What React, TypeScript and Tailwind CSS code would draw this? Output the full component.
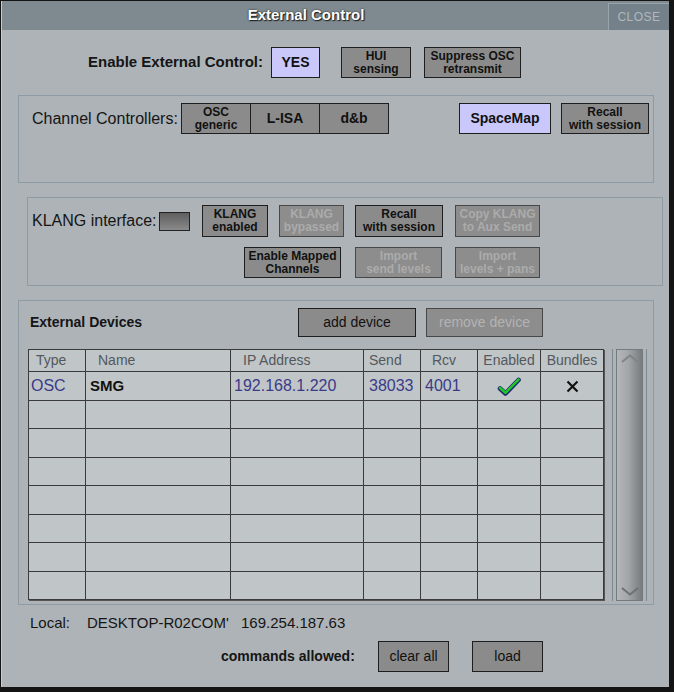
import React from "react";

type Tone = "normal" | "on" | "off";

const tones: Record<Tone, string> = {
  normal: "bg-[#8b8b8b] border-[#1e1e1e] text-[#111]",
  on: "bg-[#cac8fb] border-[#1e1e1e] text-[#111]",
  off: "bg-[#8d8d8d] border-[#474747] text-[#ababab]",
};

function Btn({
  className,
  tone = "normal",
  children,
}: {
  className: string;
  tone?: Tone;
  children: React.ReactNode;
}) {
  return (
    <div
      className={`flex shrink-0 flex-col items-center justify-center border text-center ${tones[tone]} ${className}`}
    >
      {children}
    </div>
  );
}

function Two({ a, b }: { a: string; b: string }) {
  return (
    <>
      <span className="block text-[12px] font-bold leading-[13px]">{a}</span>
      <span className="block text-[12px] font-bold leading-[13px]">{b}</span>
    </>
  );
}

const cols = [
  { w: "w-[56px]", head: "pl-[7px] text-[#4b4a8f]", cell: "pl-[2px]" },
  { w: "w-[145px] border-l", head: "pl-[12px]", cell: "pl-[4px]" },
  { w: "w-[133px] border-l", head: "pl-[12px]", cell: "pl-[3px]" },
  { w: "w-[57px] border-l", head: "pl-[5px]", cell: "pl-[5px]" },
  { w: "w-[57px] border-l", head: "pl-[11px]", cell: "pl-[4px]" },
  { w: "w-[63px] border-l", head: "justify-center", cell: "justify-center" },
  { w: "w-[63px] border-l", head: "justify-center", cell: "justify-center" },
];

const headers = ["Type", "Name", "IP Address", "Send", "Rcv", "Enabled", "Bundles"];

function Check() {
  return (
    <svg width="26" height="20" viewBox="0 0 26 20">
      <path d="M4 12.5 L9.5 17.5 L22.5 4" fill="none" stroke="#1d2570" strokeWidth="4.6" strokeLinecap="round" strokeLinejoin="round" />
      <path d="M4 12 L9.5 16.8 L22.5 3.6" fill="none" stroke="#22c72a" strokeWidth="2.6" strokeLinecap="round" strokeLinejoin="round" />
    </svg>
  );
}

function Cross() {
  return (
    <svg width="13" height="13" viewBox="0 0 13 13">
      <path d="M1.5 1.5 L11.5 11.5 M11.5 1.5 L1.5 11.5" stroke="#111" strokeWidth="2.2" />
    </svg>
  );
}

function DeviceTable() {
  const rows = [0, 1, 2, 3, 4, 5, 6, 7];
  return (
    <div className="w-[576px] border border-[#3a3a3a] bg-[#c0c5c8] shadow-[1px_1px_0_#555]">
      <div className="flex h-[21px]">
        {cols.map((c, i) => (
          <div
            key={i}
            className={`flex items-center border-[#3a3a3a] text-[14px] text-[#53585c] ${c.w} ${c.head}`}
          >
            {headers[i]}
          </div>
        ))}
      </div>
      {rows.map((r) => (
        <div
          key={r}
          className={`flex border-t border-[#3a3a3a] ${r % 2 === 0 ? "h-[29px]" : "h-[28px]"}`}
        >
          {cols.map((c, i) => (
            <div
              key={i}
              className={`flex items-center border-[#3a3a3a] text-[16px] text-[#3b3a88] ${c.w} ${c.cell}`}
            >
              {r === 0 && i === 0 && "OSC"}
              {r === 0 && i === 1 && (
                <span className="text-[15px] font-bold text-[#111]">SMG</span>
              )}
              {r === 0 && i === 2 && "192.168.1.220"}
              {r === 0 && i === 3 && "38033"}
              {r === 0 && i === 4 && "4001"}
              {r === 0 && i === 5 && <Check />}
              {r === 0 && i === 6 && <Cross />}
            </div>
          ))}
        </div>
      ))}
    </div>
  );
}

function Scrollbar() {
  return (
    <div className="ml-[8px] flex h-[252px] w-[35px] border-x border-[#7d8a92] px-[3px]">
      <div className="flex w-full flex-col items-center justify-between border border-[#737b7f] bg-[linear-gradient(90deg,#b3b7b9_0%,#a2a6a8_45%,#777b7d_100%)] py-[4px]">
        <svg width="18" height="9" viewBox="0 0 18 9">
          <path d="M1 8 L9 1.5 L17 8" fill="none" stroke="#7f8486" strokeWidth="2" />
        </svg>
        <svg width="18" height="9" viewBox="0 0 18 9">
          <path d="M1 1 L9 7.5 L17 1" fill="none" stroke="#6d7274" strokeWidth="2" />
        </svg>
      </div>
    </div>
  );
}

export default function App() {
  return (
    <div className="h-[692px] w-[674px] bg-[#141414] pb-[5px] pl-px pr-[5px] pt-px font-['Liberation_Sans',Arial,sans-serif] text-[#151515]">
      <div className="flex h-full flex-col border-l border-[#c9cdd0] bg-[#adb3b7]">
        {/* title bar */}
        <div className="flex h-[29px] shrink-0 bg-[#7e8a90]">
          <div className="flex flex-1 items-center justify-center pl-[2px] text-[15px] font-bold text-white [text-shadow:0_0_2px_#1e1e1e,1px_1px_1px_#1e1e1e]">
            External Control
          </div>
          <div className="mt-[2px] flex w-[61px] items-center justify-center border-l border-t border-[#9aa5ab] bg-[#75818a] text-[12px] tracking-[0.5px] text-[#aeb8bd]">
            CLOSE
          </div>
        </div>

        {/* enable row */}
        <div className="mt-[17px] flex items-center pl-[86px]">
          <span className="w-[183px] text-[15px] font-bold">Enable External Control:</span>
          <Btn tone="on" className="h-[31px] w-[49px]">
            <span className="text-[14px] font-bold">YES</span>
          </Btn>
          <Btn className="ml-[21px] h-[31px] w-[70px]">
            <Two a="HUI" b="sensing" />
          </Btn>
          <Btn className="ml-[13px] h-[31px] w-[97px]">
            <Two a="Suppress OSC" b="retransmit" />
          </Btn>
        </div>

        {/* channel controllers */}
        <div className="ml-[16px] mt-[17px] h-[88px] w-[636px] border border-[#8d9ba4] pl-[13px] pt-[7px]">
          <div className="flex items-center">
            <span className="w-[149px] text-[16px]">Channel Controllers:</span>
            <Btn className="h-[31px] w-[70px]">
              <Two a="OSC" b="generic" />
            </Btn>
            <Btn className="-ml-px h-[31px] w-[70px]">
              <span className="text-[14px] font-bold">L-ISA</span>
            </Btn>
            <Btn className="-ml-px h-[31px] w-[70px]">
              <span className="text-[14px] font-bold">d&amp;b</span>
            </Btn>
            <Btn tone="on" className="ml-[70px] h-[31px] w-[92px]">
              <span className="text-[14px] font-bold">SpaceMap</span>
            </Btn>
            <Btn className="ml-[10px] h-[31px] w-[88px]">
              <Two a="Recall" b="with session" />
            </Btn>
          </div>
        </div>

        {/* klang */}
        <div className="ml-[25px] mt-[14px] h-[89px] w-[636px] border border-[#8d9ba4] pl-[4px] pt-[7px]">
          <div className="flex items-center">
            <span className="w-[127px] text-[16px]">KLANG interface:</span>
            <div className="h-[19px] w-[31px] border border-[#222] bg-[linear-gradient(180deg,#5e5e5e_0%,#8a8a8a_100%)]" />
            <Btn className="ml-[12px] h-[32px] w-[66px]">
              <Two a="KLANG" b="enabled" />
            </Btn>
            <Btn tone="off" className="ml-[11px] h-[32px] w-[65px]">
              <Two a="KLANG" b="bypassed" />
            </Btn>
            <Btn className="ml-[11px] h-[32px] w-[88px]">
              <Two a="Recall" b="with session" />
            </Btn>
            <Btn tone="off" className="ml-[12px] h-[32px] w-[85px]">
              <Two a="Copy KLANG" b="to Aux Send" />
            </Btn>
          </div>
          <div className="mt-[10px] flex items-center pl-[212px]">
            <Btn className="h-[31px] w-[97px]">
              <Two a="Enable Mapped" b="Channels" />
            </Btn>
            <Btn tone="off" className="ml-[14px] h-[31px] w-[87px]">
              <Two a="Import" b="send levels" />
            </Btn>
            <Btn tone="off" className="ml-[13px] h-[31px] w-[85px]">
              <Two a="Import" b="levels + pans" />
            </Btn>
          </div>
        </div>

        {/* external devices */}
        <div className="ml-[16px] mt-[14px] h-[305px] w-[636px] border border-[#8d9ba4] pt-[7px]">
          <div className="flex items-center pl-[11px]">
            <span className="w-[268px] text-[14px] font-bold">External Devices</span>
            <Btn className="h-[29px] w-[118px]">
              <span className="text-[14px]">add device</span>
            </Btn>
            <Btn tone="off" className="ml-[10px] h-[29px] w-[117px]">
              <span className="text-[14px] text-[#b3b3b3]">remove device</span>
            </Btn>
          </div>
          <div className="ml-[9px] mt-[12px] flex items-start">
            <DeviceTable />
            <Scrollbar />
          </div>
        </div>

        {/* local */}
        <div className="mt-[9px] flex items-center pl-[28px] text-[15px] leading-[18px]">
          <span className="w-[57px]">Local:</span>
          <span className="w-[154px]">DESKTOP-R02COM&apos;</span>
          <span>169.254.187.63</span>
        </div>

        <div className="mt-[9px] flex items-center pl-[219px]">
          <span className="w-[157px] text-[14px] font-bold">commands allowed:</span>
          <Btn className="h-[31px] w-[71px]">
            <span className="text-[14px]">clear all</span>
          </Btn>
          <Btn className="ml-[23px] h-[31px] w-[71px]">
            <span className="text-[14px]">load</span>
          </Btn>
        </div>
      </div>
    </div>
  );
}
